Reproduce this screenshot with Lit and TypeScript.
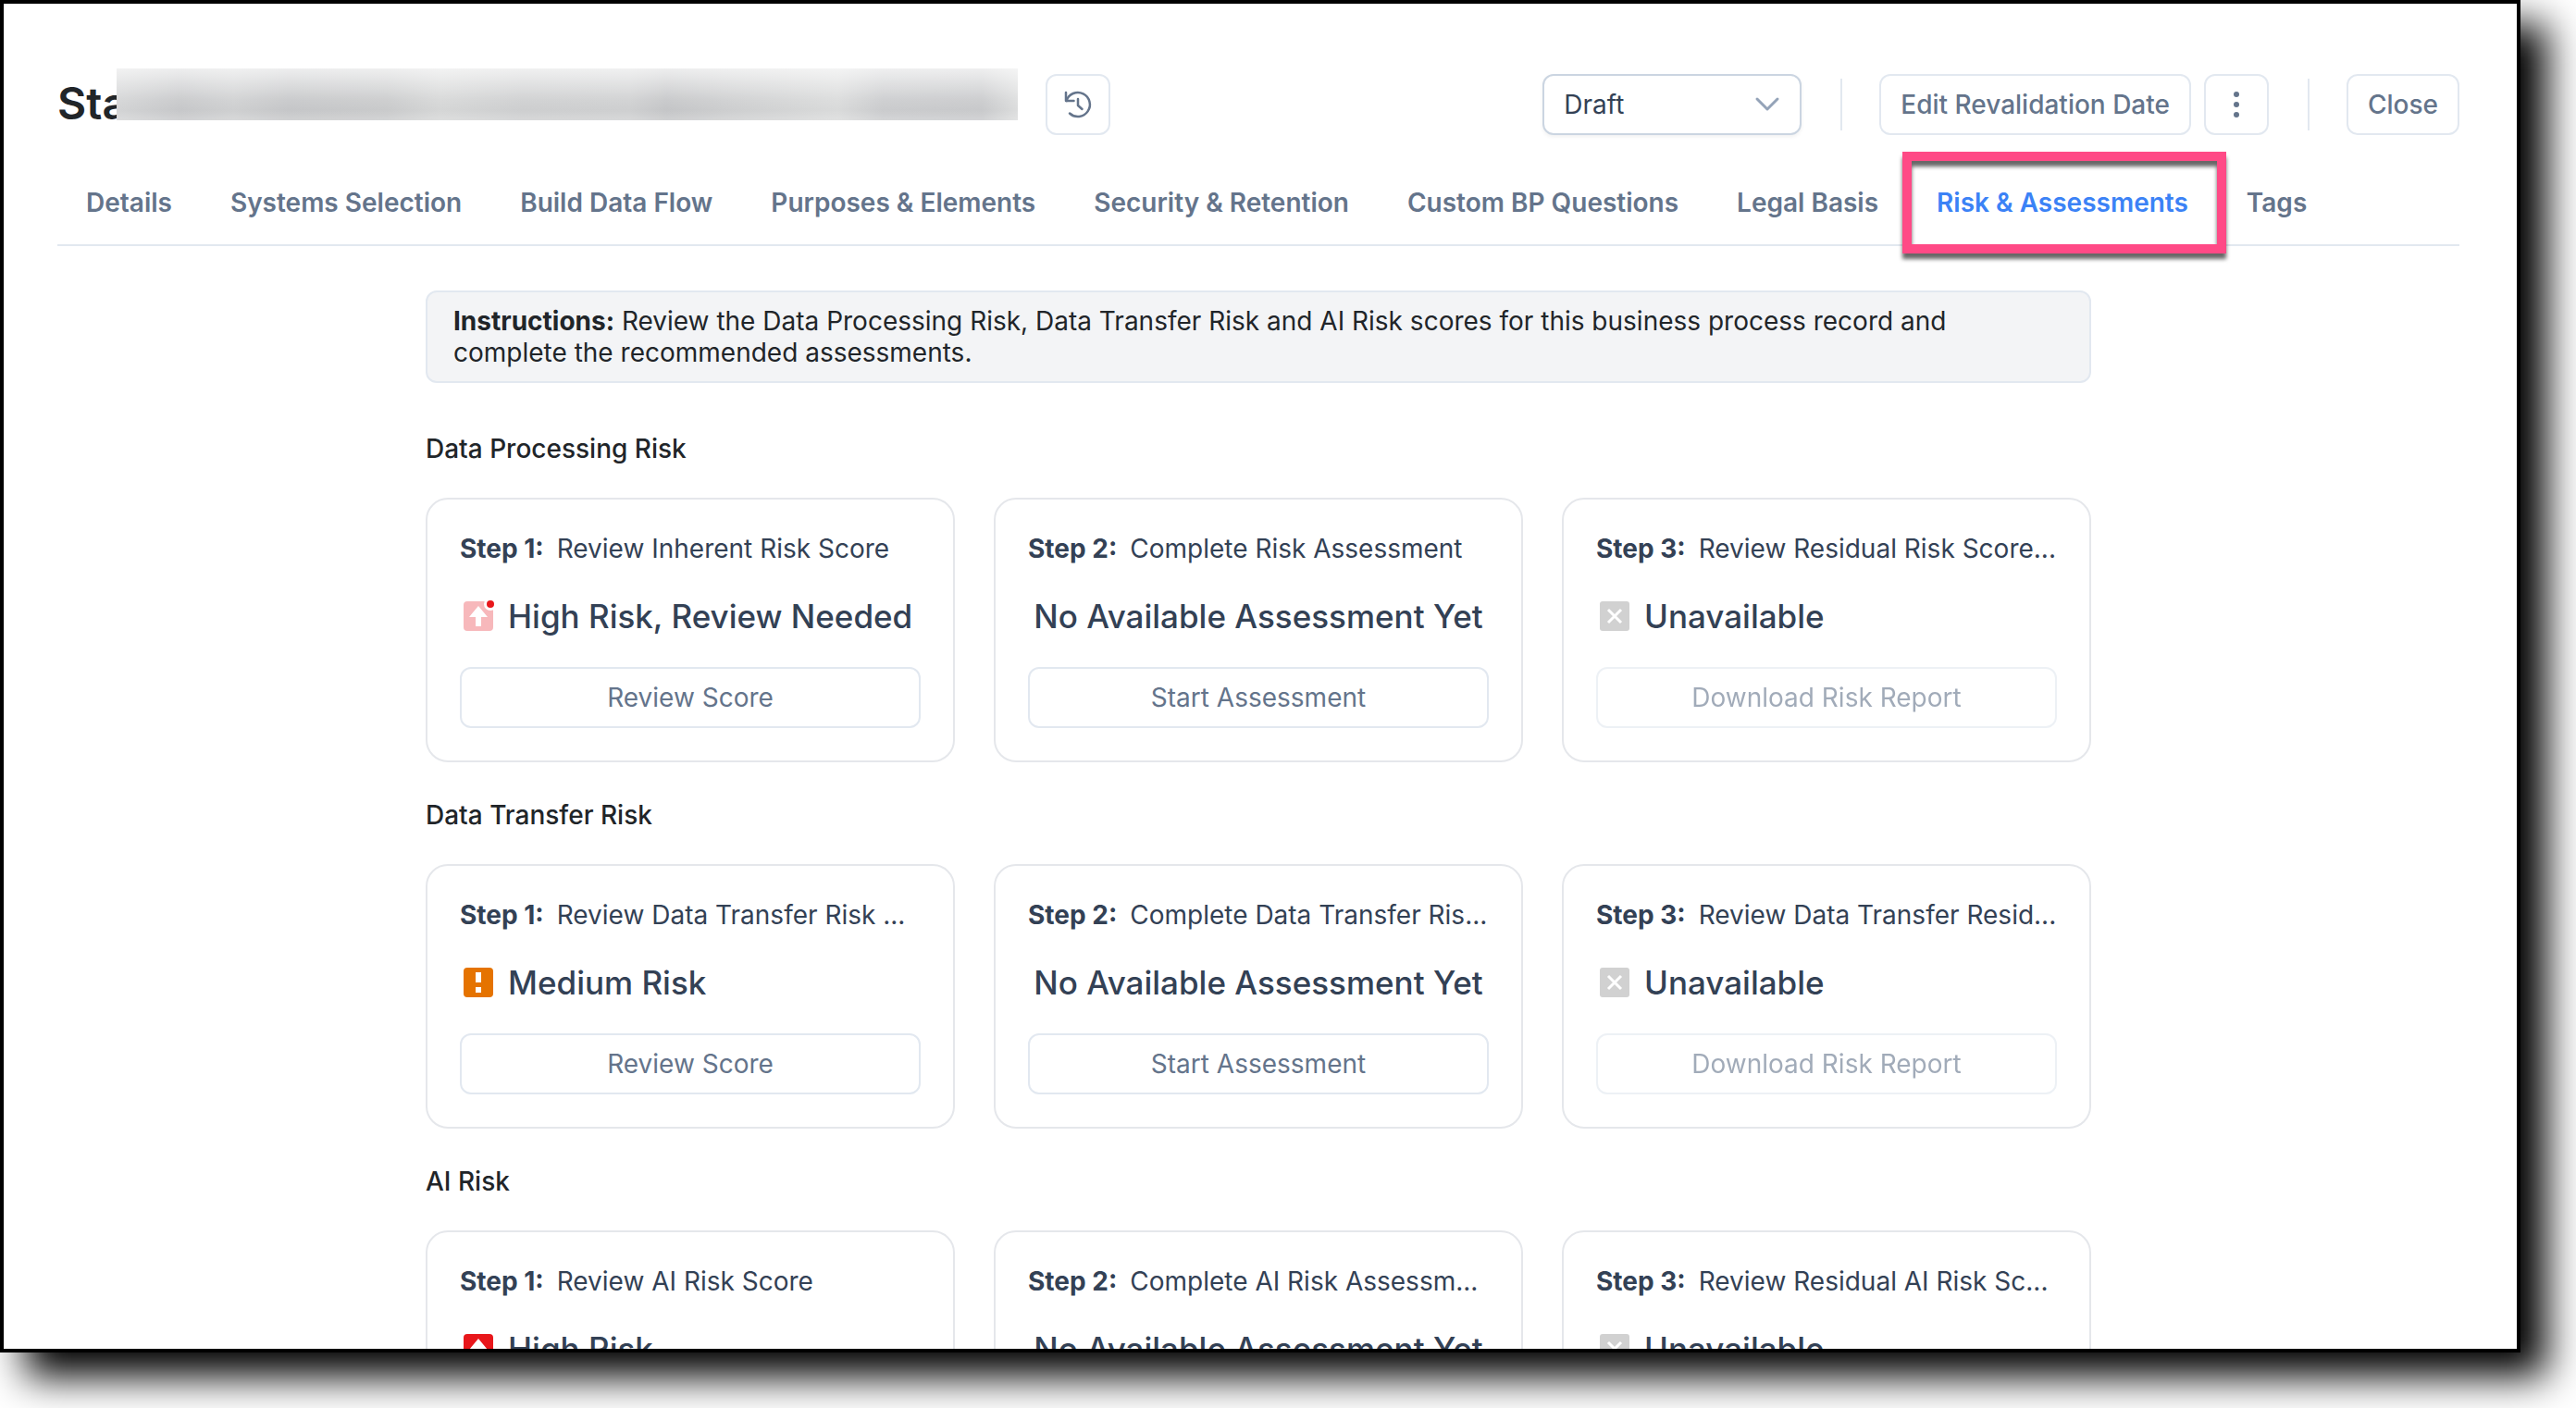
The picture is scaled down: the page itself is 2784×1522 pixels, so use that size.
import { LitElement, html, css, svg, nothing } from "lit";
import { customElement } from "lit/decorators.js";

type Level = "high-review" | "high" | "medium" | "unavailable" | "none";

interface Step {
  title: string;
  level: Level;
  status: string;
  action: string;
  disabled?: boolean;
}

interface Section {
  name: string;
  steps: Step[];
}

const TABS = [
  "Details",
  "Systems Selection",
  "Build Data Flow",
  "Purposes & Elements",
  "Security & Retention",
  "Custom BP Questions",
  "Legal Basis",
  "Risk & Assessments",
  "Tags",
];
const ACTIVE_TAB = "Risk & Assessments";

const makeSection = (
  name: string,
  titles: [string, string, string],
  level: Level,
  status: string,
): Section => ({
  name,
  steps: [
    { title: titles[0], level, status, action: "Review Score" },
    { title: titles[1], level: "none", status: "No Available Assessment Yet", action: "Start Assessment" },
    { title: titles[2], level: "unavailable", status: "Unavailable", action: "Download Risk Report", disabled: true },
  ],
});

const SECTIONS: Section[] = [
  makeSection(
    "Data Processing Risk",
    ["Review Inherent Risk Score", "Complete Risk Assessment", "Review Residual Risk Score..."],
    "high-review",
    "High Risk, Review Needed",
  ),
  makeSection(
    "Data Transfer Risk",
    ["Review Data Transfer Risk ...", "Complete Data Transfer Ris...", "Review Data Transfer Resid..."],
    "medium",
    "Medium Risk",
  ),
  makeSection(
    "AI Risk",
    ["Review AI Risk Score", "Complete AI Risk Assessm...", "Review Residual AI Risk Sc..."],
    "high",
    "High Risk",
  ),
];

const levelGlyph = (level: Level) => {
  switch (level) {
    case "high-review":
      return svg`
        <rect x="4" y="2" width="32" height="32" rx="4" fill="#f7b8bb"/>
        <path d="M20 7 30 19H23V29H17V19H10Z" fill="#fff"/>
        <circle cx="33" cy="5" r="7" fill="#fff"/>
        <circle cx="33" cy="5" r="4" fill="#e8171b"/>`;
    case "high":
      return svg`
        <rect x="4" y="2" width="32" height="32" rx="4" fill="#e8171b"/>
        <path d="M20 7 30 19H23V29H17V19H10Z" fill="#fff"/>`;
    case "medium":
      return svg`
        <rect x="4" y="2" width="32" height="32" rx="4" fill="#e57300"/>
        <path d="M17 7h6v11h-6zM17 23h6v6h-6z" fill="#fff"/>`;
    default:
      return svg`
        <rect x="4" y="2" width="32" height="32" rx="3" fill="#d1d1d1"/>
        <path d="M13 11 27 25M27 11 13 25" stroke="#fff" stroke-width="3" fill="none"/>`;
  }
};

@customElement("risk-card")
export class RiskCard extends LitElement {
  static properties = { step: { attribute: false }, index: { type: Number } };
  declare step: Step;
  declare index: number;

  static styles = css`
    :host {
      display: block;
      min-width: 0;
    }
    .card {
      box-sizing: border-box;
      border: 2px solid #e5e7eb;
      border-radius: 24px;
      padding: 35px;
      color: #334155;
    }
    .title {
      margin: 0;
      font-size: 28px;
      line-height: 36px;
      font-weight: 400;
      white-space: nowrap;
      overflow: hidden;
    }
    .number {
      font-weight: 700;
      margin-right: 14px;
    }
    .status {
      display: flex;
      align-items: center;
      gap: 14px;
      margin: 33px 0;
      font-size: 35px;
      line-height: 44px;
      font-weight: 500;
      white-space: nowrap;
    }
    .status.centered {
      justify-content: center;
    }
    .level {
      width: 38px;
      height: 36px;
      overflow: visible;
      flex: none;
    }
    .action {
      display: block;
      box-sizing: border-box;
      width: 100%;
      height: 66px;
      border: 2px solid #e2e8f0;
      border-radius: 12px;
      background: #fff;
      color: #64748b;
      font: inherit;
      font-size: 28px;
    }
    .action:disabled {
      opacity: 0.6;
    }
  `;

  render() {
    const { step } = this;
    return html`
      <article class="card">
        <h3 class="title"><span class="number">Step ${this.index}:</span>${step.title}</h3>
        <div class="status ${step.level === "none" ? "centered" : ""}">
          ${step.level === "none"
            ? nothing
            : html`<svg class="level" viewBox="0 0 38 36" aria-hidden="true">${levelGlyph(step.level)}</svg>`}
          <span>${step.status}</span>
        </div>
        <button class="action" type="button" ?disabled=${step.disabled}>${step.action}</button>
      </article>
    `;
  }
}

@customElement("app-root")
export class AppRoot extends LitElement {
  static styles = css`
    :host {
      display: block;
      box-sizing: border-box;
      height: 100vh;
      padding: 0 60px 60px 0;
      overflow: hidden;
      background: #fff;
      font-family: Inter, "Liberation Sans", sans-serif;
      font-size: 28px;
      color: #212529;
    }
    .window {
      box-sizing: border-box;
      height: 100%;
      border: 4px solid #000;
      background: #fff;
      box-shadow: 28px 26px 40px 0 #000;
    }
    .page {
      box-sizing: border-box;
      height: 100%;
      overflow: hidden;
      padding: 76px 62px 0 58px;
    }
    .header {
      display: flex;
      align-items: center;
      height: 66px;
    }
    .name {
      position: relative;
      box-sizing: border-box;
      flex: 0 1 1038px;
      margin: 0;
      padding-bottom: 2px;
      font-size: 48px;
      line-height: 64px;
      font-weight: 600;
      white-space: nowrap;
    }
    .redaction {
      position: absolute;
      left: 64px;
      right: 0;
      top: -6px;
      height: 56px;
      background:
        linear-gradient(180deg, rgba(255, 255, 255, 0.7), rgba(255, 255, 255, 0.1) 60%, rgba(255, 255, 255, 0) 80%, rgba(255, 255, 255, 0.2)),
        linear-gradient(90deg, #d3d4d5 0, #c6c7c9 7%, #cecfd0 13%, #c5c6c8 19%, #c9cacb 30%, #d5d6d6 36%, #cdcecf 45%, #cecfd0 57%, #c4c5c7 61%, #cdcecf 68%, #d9dada 80%, #cacbcd 85%, #c8c9cb 96%, #dcdddd 100%);
    }
    .btn {
      box-sizing: border-box;
      height: 66px;
      border: 2px solid #e2e8f0;
      border-radius: 12px;
      background: #fff;
      color: #64748b;
      font: inherit;
      font-weight: 500;
      padding: 0 21px;
      white-space: nowrap;
    }
    .square {
      width: 70px;
      padding: 0;
      display: flex;
      align-items: center;
      justify-content: center;
    }
    .history {
      margin-left: 30px;
    }
    .spacer {
      flex: 1;
    }
    .picker {
      position: relative;
      display: flex;
    }
    .select {
      box-sizing: border-box;
      width: 280px;
      height: 66px;
      appearance: none;
      border: 2px solid #cbd5e1;
      border-radius: 12px;
      background: #fff;
      box-shadow: 0 2px 4px rgba(18, 18, 23, 0.06);
      color: #334155;
      font: inherit;
      padding: 0 21px;
    }
    .chevron {
      position: absolute;
      right: 23px;
      top: 19px;
      pointer-events: none;
    }
    .divider {
      width: 2px;
      height: 56px;
      background: #e2e8f0;
      margin: 0 40px 0 42px;
    }
    .more {
      margin-left: 14px;
    }
    .tabs {
      display: flex;
      gap: 1px;
      border-bottom: 2px solid #e2e8f0;
      margin-top: 28px;
      height: 90px;
    }
    .tab {
      position: relative;
      display: flex;
      align-items: center;
      padding: 0 31px;
      color: #64748b;
      font-weight: 600;
      text-decoration: none;
      white-space: nowrap;
    }
    .tab.active {
      color: #3b82f6;
    }
    .marker {
      position: absolute;
      inset: -10px -10px -10px -6px;
      border: 10px solid #ff4a86;
      filter: drop-shadow(0 6px 2px rgba(0, 0, 0, 0.6));
      pointer-events: none;
    }
    .content {
      max-width: 1800px;
      margin: 48px auto 0;
    }
    .instructions {
      margin: 0;
      border: 2px solid #e2e8f0;
      border-radius: 12px;
      background: #f3f4f6;
      padding: 14px 28px;
      line-height: 34px;
    }
    .section-name {
      margin: 54px 0 36px;
      font-size: 28px;
      line-height: 34px;
      font-weight: 500;
    }
    .section + .section .section-name {
      margin: 40px 0 36px;
    }
    .cards {
      display: grid;
      grid-template-columns: repeat(3, minmax(0, 1fr));
      gap: 42px;
    }
  `;

  render() {
    return html`
      <div class="window">
        <main class="page">
          <header class="header">
            <h1 class="name">Sta<span class="redaction"></span></h1>
            <button class="btn square history" type="button" aria-label="History">
              <svg width="32" height="32" viewBox="0 0 32 32" fill="none" stroke="#64748b" stroke-width="2.5" stroke-linecap="round" stroke-linejoin="round" aria-hidden="true">
                <path d="M3 3V12H11.500"/>
                <path d="M3.500 12A13 13 0 1 1 7 25.500"/>
                <path d="M16 10V17L20.500 21"/>
              </svg>
            </button>
            <span class="spacer"></span>
            <div class="picker">
              <select class="select" aria-label="Status">
                <option selected>Draft</option>
              </select>
              <svg class="chevron" width="28" height="28" viewBox="0 0 28 28" fill="none" stroke="#94a3b8" stroke-width="3" stroke-linecap="round" stroke-linejoin="round" aria-hidden="true">
                <path d="M3 8 14 19 25 8"/>
              </svg>
            </div>
            <span class="divider"></span>
            <button class="btn" type="button">Edit Revalidation Date</button>
            <button class="btn square more" type="button" aria-label="More actions">
              <svg width="8" height="32" viewBox="0 0 8 32" fill="#64748b" aria-hidden="true">
                <circle cx="4" cy="5" r="3"/><circle cx="4" cy="16" r="3"/><circle cx="4" cy="27" r="3"/>
              </svg>
            </button>
            <span class="divider"></span>
            <button class="btn" type="button">Close</button>
          </header>
          <nav class="tabs">
            ${TABS.map(
              (tab) => html`<a class="tab ${tab === ACTIVE_TAB ? "active" : ""}" href="#"
                >${tab}${tab === ACTIVE_TAB ? html`<span class="marker"></span>` : nothing}</a
              >`,
            )}
          </nav>
          <div class="content">
            <p class="instructions">
              <strong>Instructions:</strong> Review the Data Processing Risk, Data Transfer Risk and AI Risk scores
              for this business process record and complete the recommended assessments.
            </p>
            ${SECTIONS.map(
              (section) => html`
                <section class="section">
                  <h2 class="section-name">${section.name}</h2>
                  <div class="cards">
                    ${section.steps.map((step, i) => html`<risk-card .step=${step} .index=${i + 1}></risk-card>`)}
                  </div>
                </section>
              `,
            )}
          </div>
        </main>
      </div>
    `;
  }
}
